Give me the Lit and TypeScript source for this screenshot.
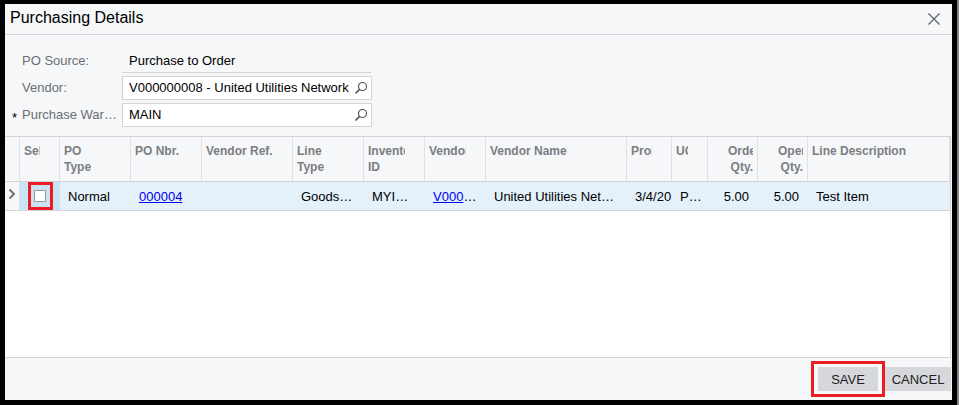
import { LitElement, html, css } from "lit";
import { customElement, state } from "lit/decorators.js";

interface Column {
  key: string;
  label: string;
  right?: boolean;
  link?: boolean;
}

const columns: Column[] = [
  { key: "type", label: "PO Type" },
  { key: "nbr", label: "PO Nbr.", link: true },
  { key: "ref", label: "Vendor Ref." },
  { key: "line", label: "Line Type" },
  { key: "inventory", label: "Inventory ID" },
  { key: "vendor", label: "Vendor", link: true },
  { key: "name", label: "Vendor Name" },
  { key: "date", label: "Promised" },
  { key: "uom", label: "UOM" },
  { key: "order", label: "Order Qty.", right: true },
  { key: "open", label: "Open Qty.", right: true },
  { key: "description", label: "Line Description" },
];

const rows: Record<string, string>[] = [
  {
    type: "Normal",
    nbr: "000004",
    ref: "",
    line: "Goods for IN",
    inventory: "MYINVENTORY",
    vendor: "V000000008",
    name: "United Utilities Network",
    date: "3/4/20",
    uom: "PIECE",
    order: "5.00",
    open: "5.00",
    description: "Test Item",
  },
];

@customElement("lookup-field")
export class LookupField extends LitElement {
  static properties = { label: {}, value: {}, required: { type: Boolean } };
  declare label: string;
  declare value: string;
  declare required: boolean;

  static styles = css`
    :host {
      display: flex;
      align-items: center;
      height: 24px;
    }
    .mark {
      width: 10px;
      flex: none;
      padding-top: 4px;
      color: #000;
    }
    label {
      width: 98px;
      flex: none;
      margin-right: 2px;
      color: #6b6e73;
      line-height: 24px;
      overflow: hidden;
      white-space: nowrap;
      text-overflow: ellipsis;
    }
    .box {
      display: flex;
      box-sizing: border-box;
      width: 250px;
      height: 24px;
      border: 1px solid #d2d4d8;
      background: #fff;
    }
    input {
      flex: 1;
      min-width: 0;
      border: 0;
      padding: 0 0 2px 6px;
      outline: 0;
      background: none;
      font: inherit;
      color: #000;
    }
    button {
      width: 20px;
      flex: none;
      border: 0;
      padding: 0;
      background: none;
      display: grid;
      place-items: center;
    }
  `;

  render() {
    return html`
      <span class="mark">${this.required ? "*" : ""}</span>
      <label for="value">${this.label}</label>
      <div class="box">
        <input id="value" .value=${this.value} ?required=${this.required} />
        <button type="button" aria-label="Look up">
          <svg width="14" height="14" viewBox="0 0 14 14" fill="none" stroke="#55585e">
            <circle cx="8.5" cy="5.5" r="4" stroke-width="1.2" />
            <path d="M5.6 8.4L1.5 12.5" stroke-width="1.7" />
          </svg>
        </button>
      </div>
    `;
  }
}

@customElement("app-root")
export class AppRoot extends LitElement {
  @state() private checked = false;

  static styles = css`
    :host {
      display: flex;
      box-sizing: border-box;
      min-height: 100vh;
      border-right: 2px solid #858585;
      background: #000;
      padding: 4px 5px 5px;
      font: 13px "Liberation Sans", Arial, sans-serif;
      color: #000;
    }
    .dialog {
      flex: 1;
      min-width: 0;
      display: flex;
      flex-direction: column;
      background: #f5f7f9;
    }
    header {
      display: flex;
      justify-content: space-between;
      align-items: center;
      height: 30px;
      padding: 0 12px 0 5px;
      border-bottom: 1px solid #d2d4d8;
    }
    h1 {
      margin: 0;
      font-size: 16px;
      font-weight: 400;
      line-height: 20px;
      padding-bottom: 2px;
    }
    .close {
      border: 0;
      padding: 0;
      background: none;
      display: flex;
    }
    form {
      display: flex;
      flex-direction: column;
      gap: 3px;
      padding: 14px 7px 9px;
    }
    .source {
      display: flex;
      padding-left: 10px;
      height: 24px;
      line-height: 24px;
    }
    .source dt {
      width: 100px;
      color: #6b6e73;
    }
    .source dd {
      margin: 0;
      box-sizing: border-box;
      width: 249px;
      padding-left: 7px;
      border-bottom: 1px solid #d2d4d8;
    }
    dl {
      margin: 0;
    }
    .grid {
      flex: 1;
      margin-right: 1px;
      border: solid #d2d4d8;
      border-width: 1px 1px 1px 0;
      background: #fff;
    }
    table {
      width: 100%;
      table-layout: fixed;
      border-collapse: separate;
      border-spacing: 0;
    }
    th,
    td {
      box-sizing: border-box;
      padding: 0;
      overflow: hidden;
      text-align: left;
      border-bottom: 1px solid #d2d4d8;
    }
    th {
      height: 45px;
      padding: 6px 19px 6px 4px;
      vertical-align: top;
      font-size: 12px;
      line-height: 16px;
      color: #7b7e82;
      background: #f5f7f9;
      border-right: 1px solid #dfe1e5;
    }
    th span {
      display: block;
      overflow: hidden;
    }
    th.right {
      padding: 6px 4px 6px 20px;
    }
    .right {
      text-align: right;
    }
    td {
      height: 29px;
      padding: 2px 9px 0 8px;
      line-height: 20px;
      white-space: nowrap;
      text-overflow: ellipsis;
      background: #e4f1fa;
    }
    td.date {
      padding-right: 0;
      text-overflow: clip;
    }
    td.marker {
      padding: 0;
      text-align: center;
      background: #f5f7f9;
      border-right: 1px solid #dfe1e5;
    }
    td.select {
      padding: 0;
      background: #c9e2f4;
      overflow: visible;
    }
    .ring {
      display: flex;
      box-sizing: border-box;
      width: 25px;
      height: 28px;
      margin-left: 8px;
      padding: 5px 0 0 3px;
      border: 3px solid #ed1c24;
    }
    .ring input {
      appearance: none;
      width: 12px;
      height: 12px;
      margin: 0;
      border: 1px solid #999;
      background: #fff;
    }
    a {
      color: #00e;
    }
    .w15 {
      width: 15px;
    }
    .w36 {
      width: 36px;
    }
    .w40 {
      width: 40px;
    }
    .w45 {
      width: 45px;
    }
    .w50 {
      width: 50px;
    }
    .w61 {
      width: 61px;
    }
    .w71 {
      width: 71px;
    }
    .w91 {
      width: 91px;
    }
    .w141 {
      width: 141px;
    }
    footer {
      display: flex;
      justify-content: flex-end;
      align-items: center;
      padding: 3px 1px 3px 0;
    }
    .save {
      border: 3px solid #ed1c24;
      padding: 3px 4px;
    }
    footer button {
      display: block;
      width: 66px;
      height: 24px;
      border: 0;
      padding: 0;
      font: inherit;
      color: #222;
      background: #d6d8dc;
    }
    .save button {
      width: 60px;
    }
  `;

  private widths = [71, 71, 91, 71, 61, 61, 141, 45, 36, 50, 50];

  private cell(column: Column, row: Record<string, string>) {
    const text = row[column.key];
    const name = column.right ? "right" : column.key === "date" ? "date" : "";
    return html`<td class=${name}>${column.link ? html`<a href="#">${text}</a>` : text}</td>`;
  }

  render() {
    return html`
      <section class="dialog" role="dialog" aria-labelledby="title">
        <header>
          <h1 id="title">Purchasing Details</h1>
          <button class="close" type="button" aria-label="Close">
            <svg width="12" height="12" viewBox="0 0 12 12" fill="none" stroke="#5d6065" stroke-width="1.2">
              <path d="M.5 .5L11.5 11.5M11.5 .5L.5 11.5" />
            </svg>
          </button>
        </header>
        <form>
          <dl class="source">
            <dt>PO Source:</dt>
            <dd>Purchase to Order</dd>
          </dl>
          <lookup-field label="Vendor:" value="V000000008 - United Utilities Network"></lookup-field>
          <lookup-field label="Purchase Warehouse:" value="MAIN" required></lookup-field>
        </form>
        <div class="grid">
          <table>
            <colgroup>
              <col class="w15" />
              <col class="w40" />
              ${this.widths.map((w) => html`<col class="w${w}" />`)}
              <col />
            </colgroup>
            <thead>
              <tr>
                <th></th>
                <th><span>Selected</span></th>
                ${columns.map((c) => html`<th class=${c.right ? "right" : ""}><span>${c.label}</span></th>`)}
              </tr>
            </thead>
            <tbody>
              ${rows.map(
                (row) => html`<tr>
                  <td class="marker">
                    <svg width="8" height="12" viewBox="0 0 8 12" fill="none" stroke="#6c6c6c" stroke-width="1.8">
                      <path d="M1.5 1.5L6 6L1.5 10.5" />
                    </svg>
                  </td>
                  <td class="select">
                    <div class="ring">
                      <input
                        type="checkbox"
                        aria-label="Selected"
                        .checked=${this.checked}
                        @change=${() => (this.checked = !this.checked)}
                      />
                    </div>
                  </td>
                  ${columns.map((c) => this.cell(c, row))}
                </tr>`
              )}
            </tbody>
          </table>
        </div>
        <footer>
          <div class="save"><button type="button">SAVE</button></div>
          <button type="button">CANCEL</button>
        </footer>
      </section>
    `;
  }
}
